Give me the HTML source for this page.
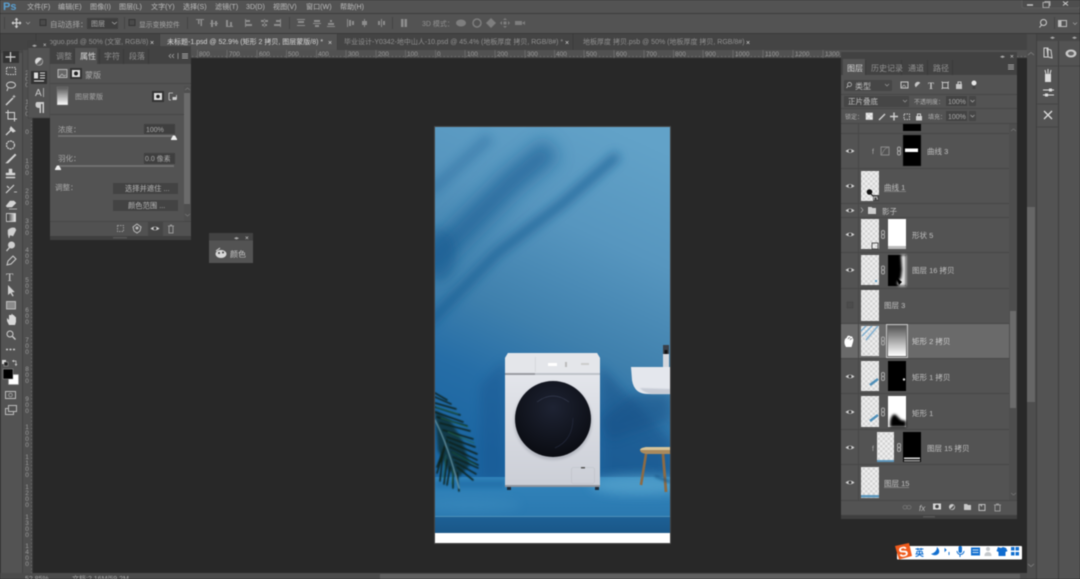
<!DOCTYPE html>
<html><head><meta charset="utf-8"><title>Photoshop</title>
<style>
html,body{margin:0;padding:0;width:1080px;height:579px;overflow:hidden;background:#282828}
svg{display:block;filter:blur(.45px)}
text{font-family:"Liberation Sans","Noto Sans CJK SC",sans-serif;font-size:8px;fill:#b8b8b8}
.mn text{font-size:7.1px;fill:#bdbdbd}
.s{font-size:7px;fill:#a8a8a8}
.r{font-size:6.5px;fill:#9c9c9c}
.d{fill:#909090}
.w{fill:#d8d8d8}
</style></head><body>
<svg width="1080" height="579" viewBox="0 0 1080 579" xmlns="http://www.w3.org/2000/svg">
<defs>
<pattern id="ck" width="5" height="5" patternUnits="userSpaceOnUse"><rect width="5" height="5" fill="#efefef"/><rect width="2.5" height="2.5" fill="#d4d4d4"/><rect x="2.5" y="2.5" width="2.5" height="2.5" fill="#d4d4d4"/></pattern>
<linearGradient id="wall" x1=".75" y1="0" x2=".45" y2="1"><stop offset="0" stop-color="#62a2c8"/><stop offset=".3" stop-color="#5796bf"/><stop offset=".6" stop-color="#3f80ad"/><stop offset=".8" stop-color="#266ea7"/><stop offset="1" stop-color="#1c66a2"/></linearGradient>
<linearGradient id="floor" x1="0" y1="0" x2="0" y2="1"><stop offset="0" stop-color="#3284bb"/><stop offset="1" stop-color="#2b79b0"/></linearGradient>
<linearGradient id="front" x1="0" y1="0" x2="0" y2="1"><stop offset="0" stop-color="#1d6095"/><stop offset="1" stop-color="#1a5788"/></linearGradient>
<linearGradient id="wash" x1="0" y1="0" x2="0" y2="1"><stop offset="0" stop-color="#e8eaef"/><stop offset="1" stop-color="#cbced6"/></linearGradient>
<linearGradient id="gm" x1="0" y1="0" x2="0" y2="1"><stop offset="0" stop-color="#555"/><stop offset="1" stop-color="#fff"/></linearGradient>
<linearGradient id="tg" x1="0" x2="1"><stop offset="0" stop-color="#222"/><stop offset="1" stop-color="#eee"/></linearGradient>
<radialGradient id="door" cx=".5" cy=".35" r=".65"><stop offset="0" stop-color="#1e2333"/><stop offset="1" stop-color="#0a0c12"/></radialGradient>
<filter id="b5" x="-60%" y="-100%" width="220%" height="300%"><feGaussianBlur stdDeviation="5"/></filter>
<filter id="b8" x="-60%" y="-60%" width="220%" height="220%"><feGaussianBlur stdDeviation="9"/></filter>
<filter id="b4" x="-60%" y="-60%" width="220%" height="220%"><feGaussianBlur stdDeviation="5"/></filter>
<filter id="b2" x="-60%" y="-200%" width="220%" height="500%"><feGaussianBlur stdDeviation="2"/></filter>
<filter id="b1" x="-30%" y="-30%" width="160%" height="160%"><feGaussianBlur stdDeviation="1.2"/></filter>
<filter id="b0" x="-30%" y="-30%" width="160%" height="160%"><feGaussianBlur stdDeviation=".5"/></filter>
<clipPath id="img"><rect x="435" y="127" width="235" height="406"/></clipPath>
<g id="eye"><path d="M-4.5 0Q0-3.8 4.5 0Q0 3.8-4.5 0Z" fill="#d0d0d0"/><circle r="1.5" fill="#3c3c3c"/></g>
<g id="lnk" fill="none" stroke="#a8a8a8" stroke-width="1"><rect x="-1.5" y="-4" width="3" height="4" rx="1.5"/><rect x="-1.5" y="0" width="3" height="4" rx="1.5"/></g>
<path id="tri" d="M-3 2L-1 -1.5H1L3 2V3H-3Z" fill="#eee"/>
</defs>

<rect width="1080" height="579" fill="#282828"/>

<!-- top bars -->
<rect width="1080" height="13" fill="#535353"/>
<rect y="13" width="1080" height="1" fill="#3c3c3c"/>
<rect y="14" width="1080" height="19" fill="#535353"/>
<rect y="33" width="1080" height="1" fill="#3a3a3a"/>
<rect y="34" width="1080" height="16" fill="#444"/>
<text x="3" y="10" style="font-size:11px;font-weight:bold;fill:#5a9fd0">Ps</text>
<g class="mn"><text x="27" y="9">文件(F)</text><text x="58" y="9">编辑(E)</text><text x="90" y="9">图像(I)</text><text x="119" y="9">图层(L)</text><text x="151" y="9">文字(Y)</text><text x="183" y="9">选择(S)</text><text x="215" y="9">滤镜(T)</text><text x="246" y="9">3D(D)</text><text x="273" y="9">视图(V)</text><text x="306" y="9">窗口(W)</text><text x="340" y="9">帮助(H)</text></g>
<path d="M1022 0v6q0 2 2 2h54q2 0 2-2V0" fill="#4e4e4e" stroke="#666" stroke-width=".6"/>
<path d="M1027 5h6" stroke="#ccc" stroke-width="1.4"/>
<path d="M1043 2.500h6v5h-6zM1045 2.500v-1h5v4h-1" fill="none" stroke="#bbb" stroke-width=".8"/>
<path d="M1063 1.500l5 4M1068 1.500l-5 4" stroke="#ccc" stroke-width="1"/>

<!-- options bar -->
<g stroke="#444" stroke-width="1"><path d="M4.500 17v12M124.500 17v12M187.500 17v12M289.500 17v12M392.500 17v12M1054.500 17v12"/></g>
<g stroke="#d4d4d4" fill="#d4d4d4"><path d="M16.500 18v10M12 23h9" stroke-width="1.300"/><path d="M14.500 20l2-2 2 2zM14.500 26l2 2 2-2zM13.500 21l-2 2 2 2zM19.500 21l2 2-2 2z" stroke="none"/></g>
<path d="M26 22l2 2 2-2" fill="none" stroke="#999" stroke-width=".8"/>
<rect x="40" y="19.500" width="6" height="6" fill="#4a4a4a" stroke="#333"/>
<text x="50" y="27" class="s" style="font-size:7.500px">自动选择：</text>
<rect x="87" y="18" width="31" height="11" fill="#3f3f3f"/><text x="91" y="26" class="s">图层</text><path d="M112 22l2.500 2 2.500-2" fill="none" stroke="#aaa" stroke-width=".8"/>
<rect x="129" y="19.500" width="6" height="6" fill="#4a4a4a" stroke="#333"/>
<text x="139" y="27" class="s" style="font-size:6.800px">显示变换控件</text>
<g fill="#8d8d8d">
<path d="M196 19h8v1h-2v6h-1.500v-6h-1v4h-1.500v-4h-2z"/><path d="M210 23h8v1h-8zM211 20h2v7h-2zM215 21h2v5h-2z"/><path d="M226 27h7v-1h-7zM226 20h2v6h-2zM230 22h2v4h-2z"/>
<path d="M245 19v8h1v-8zM246 20h4v2h-4zM246 24h6v2h-6z"/><path d="M264 19v8h1v-8zM261 20h7v2h-7zM262 24h5v2h-5z"/><path d="M281 19v8h-1v-8zM276 20h4v2h-4zM274 24h6v2h-6z"/>
<path d="M297 19h8v1h-8zM298 21h6v2h-6zM297 25h8v1h-8z"/><path d="M313 23h8v1h-8zM314 20h6v2h-6zM315 25h4v2h-4z"/><path d="M327 26h8v1h-8zM328 23h6v2h-6zM330 20h2v2h-2z"/>
<path d="M347 19h1v8h-1zM349 20h2v6h-2zM352 21h2v4h-2z"/><path d="M364 19h1v8h-1zM362 21h2v4h-2zM365 21h2v4h-2z"/><path d="M381 19h1v8h-1zM378 21h2v4h-2zM383 21h2v4h-2z"/>
<path d="M401 19h2.500v8h-2.500zM404.500 19h2.500v8h-2.500z"/>
</g>
<text x="422" y="26" class="d" style="font-size:7px">3D 模式：</text>
<g fill="#7e7e7e"><ellipse cx="461" cy="23" rx="5" ry="3.500"/><circle cx="477" cy="23" r="4" fill="none" stroke="#7e7e7e" stroke-width="1.500"/><path d="M491 18l5 5-5 5-5-5z"/><path d="M505 18l2 2h-4zM505 28l2-2h-4zM500 23l2-2v4zM510 23l-2-2v4z"/><rect x="503.500" y="21.500" width="3" height="3"/><rect x="515" y="21" width="7" height="4"/><path d="M522 23l3-2v4z"/></g>
<circle cx="1043.500" cy="22.500" r="3" fill="none" stroke="#ccc" stroke-width="1"/><path d="M1041.500 25l-2 2.500" stroke="#ccc" stroke-width="1"/>
<rect x="1058.500" y="20.500" width="8" height="6" fill="none" stroke="#bbb"/><rect x="1059" y="21" width="2.500" height="5" fill="#bbb"/>
<path d="M1073 22.500l2 2 2-2" fill="none" stroke="#999" stroke-width=".8"/>

<!-- tabs -->
<path d="M36 34v16M160 34v16M337 34v16M573 34v16" stroke="#3a3a3a"/>
<rect x="160" y="34" width="177" height="16" fill="#535353"/>
<text x="49" y="44" class="d" style="font-size:7px">oguo.psd @ 50% (文室, RGB/8)</text>
<text x="150" y="45" class="w" style="font-size:7px">×</text>
<text x="167" y="44" class="w" style="font-size:7px">未标题-1.psd @ 52.9% (矩形 2 拷贝, 图层蒙版/8) *</text>
<text x="328" y="45" class="w" style="font-size:7px">×</text>
<text x="344" y="44" class="d" style="font-size:7px">毕业设计-Y0342-地中山人-10.psd @ 45.4% (地板厚度 拷贝, RGB/8#) *</text>
<text x="565" y="45" class="w" style="font-size:7px">×</text>
<text x="583" y="44" class="d" style="font-size:7px">地板厚度 拷贝.psb @ 50% (地板厚度 拷贝, RGB/8#)</text>
<text x="746" y="45" class="w" style="font-size:7px">×</text>

<!-- rulers -->
<rect x="0" y="50" width="1027" height="8" fill="#515151"/>
<rect x="33" y="57.500" width="994" height=".8" fill="#3c3c3c"/>
<line x1="33" y1="56.500" x2="1027" y2="56.500" stroke="#777" stroke-width="1" stroke-dasharray="1 2.700"/>
<g>
<text class="r" x="199" y="56">800</text><text class="r" x="229" y="56">700</text><text class="r" x="259" y="56">600</text><text class="r" x="288" y="56">500</text><text class="r" x="318" y="56">400</text><text class="r" x="348" y="56">300</text><text class="r" x="378" y="56">200</text><text class="r" x="407" y="56">100</text><text class="r" x="437" y="56">0</text><text class="r" x="467" y="56">100</text><text class="r" x="497" y="56">200</text><text class="r" x="527" y="56">300</text><text class="r" x="556" y="56">400</text><text class="r" x="586" y="56">500</text><text class="r" x="616" y="56">600</text><text class="r" x="646" y="56">700</text><text class="r" x="675" y="56">800</text><text class="r" x="705" y="56">900</text><text class="r" x="735" y="56">1000</text><text class="r" x="765" y="56">1100</text><text class="r" x="795" y="56">1200</text><text class="r" x="825" y="56">1300</text>
</g>
<path d="M197.500 50v8M227 50v8M257 50v8M286.500 50v8M316.500 50v8M346 50v8M376 50v8M405.500 50v8M435.500 50v8M465 50v8M495 50v8M525 50v8M554.500 50v8M584 50v8M614 50v8M644 50v8M673.500 50v8M703 50v8M733 50v8M763 50v8M793 50v8M823 50v8" stroke="#727272" stroke-width=".7"/>

<rect x="0" y="50" width="33" height="529" fill="#4f4f4f"/>
<rect x="0" y="50" width="1" height="529" fill="#3c3c3c"/>
<rect x="1" y="50" width="21" height="523" fill="#535353"/>
<rect x="22" y="50" width="1" height="529" fill="#424242"/>
<rect x="32" y="58" width="1" height="521" fill="#3a3a3a"/>
<line x1="31.500" y1="58" x2="31.500" y2="573" stroke="#777" stroke-dasharray="1 2.700"/>
<g id="vr" style="text-anchor:middle">
<text class="r" x="27" y="75">2</text><text class="r" x="27" y="81">0</text><text class="r" x="27" y="87">0</text>
<text class="r" x="27" y="104">1</text><text class="r" x="27" y="110">0</text><text class="r" x="27" y="116">0</text>
<text class="r" x="27" y="134">0</text>
<text class="r" x="27" y="163">1</text><text class="r" x="27" y="169">0</text><text class="r" x="27" y="175">0</text>
<text class="r" x="27" y="193">2</text><text class="r" x="27" y="199">0</text><text class="r" x="27" y="205">0</text>
<text class="r" x="27" y="223">3</text><text class="r" x="27" y="229">0</text><text class="r" x="27" y="235">0</text>
<text class="r" x="27" y="252">4</text><text class="r" x="27" y="258">0</text><text class="r" x="27" y="264">0</text>
<text class="r" x="27" y="282">5</text><text class="r" x="27" y="288">0</text><text class="r" x="27" y="294">0</text>
<text class="r" x="27" y="312">6</text><text class="r" x="27" y="318">0</text><text class="r" x="27" y="324">0</text>
<text class="r" x="27" y="342">7</text><text class="r" x="27" y="348">0</text><text class="r" x="27" y="354">0</text>
<text class="r" x="27" y="371">8</text><text class="r" x="27" y="377">0</text><text class="r" x="27" y="383">0</text>
<text class="r" x="27" y="401">9</text><text class="r" x="27" y="407">0</text><text class="r" x="27" y="413">0</text>
<text class="r" x="27" y="429">1</text><text class="r" x="27" y="435">0</text><text class="r" x="27" y="441">0</text><text class="r" x="27" y="447">0</text>
<text class="r" x="27" y="459">1</text><text class="r" x="27" y="465">1</text><text class="r" x="27" y="471">0</text><text class="r" x="27" y="477">0</text>
<text class="r" x="27" y="489">1</text><text class="r" x="27" y="495">2</text><text class="r" x="27" y="501">0</text><text class="r" x="27" y="507">0</text>
<text class="r" x="27" y="519">1</text><text class="r" x="27" y="525">3</text><text class="r" x="27" y="531">0</text><text class="r" x="27" y="537">0</text>
<text class="r" x="27" y="548">1</text><text class="r" x="27" y="554">4</text><text class="r" x="27" y="560">0</text><text class="r" x="27" y="566">0</text>
</g>

<!-- tools -->
<rect x="1" y="50" width="21" height="3" fill="#484848"/>
<rect x="3" y="51" width="16" height="12" fill="#333"/>
<g fill="#d4d4d4" stroke="#d4d4d4" stroke-width="1">
<path d="M10.500 52v10M5.500 57h10" stroke-width="1.200"/>
<rect x="6.500" y="67.500" width="9" height="7" fill="none" stroke-dasharray="1.500 1"/>
<ellipse cx="11" cy="85" rx="4.500" ry="3" fill="none"/><path d="M8 88l-1 3" fill="none"/>
<path d="M6 105l7-7" stroke-width="1.500"/><path d="M14 95v3M12.500 96.500h3" stroke-width=".7"/>
<path d="M8 110v9h9M5.500 112.500h9v9" fill="none"/>
<path d="M6 135l6-6" stroke-width="1.300"/><path d="M11 127l4 4-2 1-3-3z"/>
<ellipse cx="10.500" cy="145" rx="4" ry="4" fill="none" stroke-dasharray="2 .6" stroke-width="1.200"/>
<path d="M6 163l3-3 6-6 1 1-6 6-2 2z" stroke-width=".6"/>
<path d="M9 169h3v4h3v2H6v-2h3zM6 177h9v1H6z" stroke-width=".5"/>
<path d="M6 193l8-8M7 186l2 2" stroke-width="1.200"/><path d="M14 192h3" stroke-width=".8"/>
<path d="M6 206l4-5h4l2 2-4 4H7z" stroke-width=".5"/><path d="M9 209h8" stroke-width=".7"/>
</g>
<rect x="6.500" y="213.500" width="9" height="8" fill="url(#tg)" stroke="#ddd" stroke-width=".8"/>
<g fill="#cfcfcf" stroke="#cfcfcf" stroke-width="1">
<path d="M8 230q3-3 7-2l1 2-3 6-3-1-1 3-1-4z" stroke-width=".4"/>
<circle cx="11.500" cy="245" r="3" /><path d="M9.500 247.500l-3 3.500" stroke-width="1.300"/>
<path d="M7 265l1-4 5-5 3 3-5 5z" fill="none"/>
</g>
<text x="6" y="281" style="font-size:12px;font-family:'Liberation Serif',serif;fill:#cfcfcf">T</text>
<path d="M8 285v10l2.500-2 2 3.500 1.200-.8-2-3.300 3-.4z" fill="#cfcfcf"/>
<rect x="6.500" y="301.500" width="9" height="7.500" fill="#8a8a8a" stroke="#cfcfcf" stroke-width=".8"/>
<path d="M7 318v3l2 4h6l1-3v-5h-1v-1h-1v-1h-1.500v-1h-1v1H9v5z" fill="#d8d8d8"/>
<circle cx="10" cy="334" r="3" fill="none" stroke="#cfcfcf" stroke-width="1"/><path d="M12.500 336.500l3 3" stroke="#cfcfcf" stroke-width="1.300"/>
<path d="M6 349.500h2M9.500 349.500h2M13 349.500h2" stroke="#cfcfcf" stroke-width="1.500"/>
<rect x="2" y="360" width="4" height="4" fill="#ddd"/><rect x="4" y="362" width="4" height="4" fill="#222" stroke="#ccc" stroke-width=".4"/>
<path d="M13 361h3v4M14 360l-1.500 1 1.500 1M15 364l1 1.500 1-1.500" fill="none" stroke="#ccc" stroke-width=".7"/>
<rect x="8.500" y="374.500" width="10" height="10" fill="#fff" stroke="#999" stroke-width=".5"/>
<rect x="3" y="369" width="10" height="10" fill="#000" stroke="#aaa" stroke-width=".5"/>
<rect x="5.500" y="391.500" width="10" height="7" fill="none" stroke="#bbb"/><circle cx="10.500" cy="395" r="1.800" fill="none" stroke="#999"/>
<rect x="5.500" y="408.500" width="8" height="6" fill="#535353" stroke="#bbb"/><rect x="8.500" y="405.500" width="8" height="6" fill="#535353" stroke="#bbb"/>

<!-- canvas scroll + dock -->
<rect x="1027" y="34" width="53" height="545" fill="#4c4c4c"/>
<rect x="1027" y="50" width="8" height="529" fill="#4e4e4e"/>
<rect x="1027" y="207" width="8" height="195" fill="#666"/>
<path d="M1028 564l3 2.500 3-2.500M1028 55l3-2.500 3 2.500" fill="none" stroke="#777" stroke-width=".9"/>
<rect x="1036" y="34" width="1" height="545" fill="#3f3f3f"/>
<rect x="1037" y="34" width="21" height="545" fill="#535353"/>
<rect x="1058" y="34" width="1" height="545" fill="#3f3f3f"/>
<rect x="1059" y="34" width="21" height="545" fill="#535353"/>
<rect x="1037" y="34" width="43" height="7" fill="#474747"/>
<path d="M1037 66h21M1037 104h21M1037 127h21M1059 66h21" stroke="#454545"/>
<text x="1050" y="39" class="s" style="font-size:5px">◂▸</text><text x="1072" y="39" class="s" style="font-size:5px">◂▸</text>
<path d="M1044 48h4v9h-4zM1047 49l4 1 1 8-4-1z" fill="none" stroke="#d0d0d0" stroke-width="1"/>
<ellipse cx="1071" cy="53.500" rx="5.500" ry="4" fill="#c8c8c8"/><ellipse cx="1071" cy="53.500" rx="3" ry="2" fill="#666"/>
<path d="M1045 74h6v8h-6z" fill="#ddd"/><path d="M1046 74l-1-4M1048 74v-5M1050 74l1-4" stroke="#ddd" stroke-width="1"/>
<path d="M1043 90h11M1043 95h11" stroke="#ddd" stroke-width="1"/><rect x="1049" y="88.500" width="3" height="3" fill="#ddd"/><rect x="1045" y="93.500" width="3" height="3" fill="#ddd"/>
<path d="M1044 111l8 8M1052 111l-8 8" stroke="#ddd" stroke-width="1.300"/>

<!-- status bar -->
<rect x="33" y="573" width="994" height="6" fill="#4b4b4b"/>
<rect x="0" y="573" width="33" height="6" fill="#4b4b4b"/>
<rect x="380" y="574" width="640" height="5" fill="#606060"/>
<text x="25" y="581" class="s">52.85%</text><text x="72" y="581" class="s">文档:2.16M/59.2M</text>

<!-- IMAGE -->
<rect x="434.500" y="126.500" width="236" height="417" fill="none" stroke="#444"/>
<rect x="435" y="127" width="235" height="416" fill="#fff"/>
<g clip-path="url(#img)">
<rect x="435" y="127" width="235" height="352" fill="url(#wall)"/>
<g fill="none" stroke="#175a90">
<path d="M428 324L497 253L563 203L618 155" stroke-width="9" opacity=".72" filter="url(#b4)"/>
<path d="M425 268L513 180L552 148" stroke-width="24" opacity=".68" filter="url(#b8)"/>
<path d="M430 192L490 137" stroke-width="12" opacity=".32" filter="url(#b4)"/>
</g>
<ellipse cx="440" cy="255" rx="16" ry="26" fill="#175a90" opacity=".45" filter="url(#b4)"/>
<!-- shadows -->
<path d="M600 365L670 440V480H600Z" fill="#124f85" opacity=".5" filter="url(#b5)"/>
<path d="M632 395L600 420L610 440L670 420V395Z" fill="#124f85" opacity=".5" filter="url(#b5)"/>
<path d="M505 360L480 385V480H505Z" fill="#125089" opacity=".35" filter="url(#b5)"/>
<!-- floor -->
<rect x="435" y="477" width="235" height="40" fill="url(#floor)"/>
<ellipse cx="640" cy="485" rx="50" ry="10" fill="#59a6cf" opacity=".7" filter="url(#b5)"/>
<ellipse cx="470" cy="505" rx="50" ry="8" fill="#3f8fc0" opacity=".4" filter="url(#b5)"/>
<path d="M435 480h70v8h-70z" fill="#15609b" opacity=".45" filter="url(#b2)"/>
<rect x="435" y="516" width="235" height="1" fill="#4c90ba"/>
<rect x="435" y="517" width="235" height="16" fill="url(#front)"/>
<!-- washer -->
<rect x="507" y="487" width="4" height="3" fill="#1c2c3c"/><rect x="595" y="487" width="4" height="3" fill="#1c2c3c"/>
<path d="M505 358l3-5h89l3 5v127q0 2-2 2h-91q-2 0-2-2z" fill="url(#wash)"/>
<path d="M505 358l3-5h89l3 5v14h-95z" fill="#e4e6ea"/>
<rect x="505" y="373" width="95" height="2" fill="#bfc2c8"/>
<rect x="505" y="373" width="30" height="2" fill="#9a9ca2"/>
<path d="M535 357h.8v15h-.8z" fill="#d2d4d8"/>
<rect x="548" y="363" width="9" height="3" fill="#fff"/>
<rect x="565" y="362" width="2" height="5" fill="#bbb"/>
<rect x="581" y="363" width="8" height="2" fill="#ccc"/>
<rect x="571.500" y="467.500" width="23" height="16" rx="2" fill="none" stroke="#bcbfc5" stroke-width=".6"/>
<rect x="581" y="467" width="4" height="1.500" fill="#555"/>
<rect x="505" y="485" width="95" height="2" fill="#8f939c"/>
<circle cx="553" cy="421" r="39" fill="#9a9ea8" opacity=".55" filter="url(#b1)"/>
<circle cx="553" cy="419" r="38" fill="url(#door)"/>
<path d="M537 402q16-12 32 0" fill="none" stroke="#343a4e" stroke-width=".7"/>
<path d="M555 448q18-8 18-30" fill="none" stroke="#22283a" stroke-width=".8"/>
<!-- sink -->
<path d="M631 367h39v27h-22q-14 0-16-14z" fill="#e4e7ed"/>
<path d="M640 388q4 5 12 6h18v-5z" fill="#c7ccd6" filter="url(#b0)"/>
<rect x="663" y="350" width="6" height="17" fill="#d4d7dd"/>
<rect x="663" y="345" width="6" height="9" fill="#3a3f48"/>
<rect x="664.500" y="350" width="3" height="4" fill="#111"/>
<!-- stool -->
<path d="M646 454l-5 31" stroke="#8c6b45" stroke-width="2.600"/>
<path d="M663 454l3 38" stroke="#8c6b45" stroke-width="2.800"/>
<path d="M640 450q0-2 6-3h24v7h-24q-6-1-6-4z" fill="#a98a5e"/>
<path d="M640 450q0-2 6-3h24v3h-30z" fill="#d6c49a"/>
<path d="M655 476l15 6" stroke="#144f80" stroke-width="3" opacity=".6" filter="url(#b1)"/>
<!-- plant -->
<path d="M435 410L450 420L462 440L470 465L458 478L448 470L438 450Z" fill="#0b2622" opacity=".7" filter="url(#b1)"/>
<g fill="none" stroke-linecap="round" filter="url(#b0)">
<g stroke="#0a211d" stroke-width="1.500">
<path d="M435 393L447 400M435 397L451 404M435 403L456 409M435 407L460 415M435 412L463 422M437 417L467 426M440 423L470 431M443 430L473 439M447 437L475 447M449 442L477 454M450 447L477 460M452 452L478 465M453 457L478 468M455 462L476 474M457 467L473 480"/>
<path d="M447 440L437 467M445 447L437 473M443 453L440 481M447 460L444 484M450 467L447 485M453 470L453 488M457 473L459 491"/>
</g>
<g stroke="#23634c" stroke-width=".7">
<path d="M436 407L458 414M441 418L468 427M448 432L474 443M452 452L476 465"/>
<path d="M446 455L443 478M453 470L452 484"/>
</g>
<path d="M435 420Q448 445 459 488" stroke="#6a9bab" stroke-width="1.200"/>
</g>
</g>

<!-- small collapsed panel -->
<rect x="28" y="41" width="22" height="77" fill="#535353" stroke="#3c3c3c" stroke-width=".5"/>
<rect x="28" y="41" width="22" height="7" fill="#424242"/>
<text x="32" y="47" class="s" style="font-size:5px">◂▸</text><text x="43" y="47" class="w" style="font-size:6px">×</text>
<circle cx="39" cy="61.500" r="4" fill="#d8d8d8"/><path d="M36.200 64.300l5.600-5.600a4 4 0 0 1-5.600 5.600z" fill="#666"/>
<rect x="31" y="71" width="16" height="13" fill="#333"/>
<rect x="34" y="72.500" width="4" height="6" fill="#ddd"/><path d="M40 73h5M40 75.500h5M40 78h5M34 81h10" stroke="#ddd" stroke-width="1"/>
<text x="35" y="96" style="font-size:10px;fill:#ccc">A</text><path d="M43.500 88v9" stroke="#ccc" stroke-width=".7"/>
<path d="M37 102h7v11h-1.500v-9H41v9h-1.500v-5q-4 0-4-3t1.500-3z" fill="#ccc"/>

<!-- properties panel -->
<rect x="50" y="46" width="141" height="193" fill="#535353"/>
<rect x="50" y="46" width="141" height="18" fill="#424242"/>
<rect x="75" y="48" width="22" height="16" fill="#535353"/>
<path d="M99.500 49v15M123.500 49v15M148.500 49v15M74.500 49v15" stroke="#3a3a3a"/>
<text x="56" y="59" class="d">调整</text><text x="80" y="59" class="w">属性</text><text x="104" y="59" class="d">字符</text><text x="129" y="59" class="d">段落</text>
<path d="M171 54l-2 2 2 2M174 54l-2 2 2 2" fill="none" stroke="#aaa" stroke-width=".7"/><path d="M178 53v6" stroke="#888"/><path d="M182 54h6M182 56h6M182 58h6" stroke="#aaa"/>
<rect x="58" y="69.500" width="9" height="8" fill="#666" stroke="#ccc" stroke-width=".8"/><path d="M59 77l3-3 2 2 2-1" stroke="#ccc" fill="none" stroke-width=".6"/>
<rect x="70" y="68" width="12" height="11" fill="#333"/><rect x="72" y="70" width="8" height="7" fill="#ddd"/><circle cx="76" cy="73.500" r="2" fill="#222"/>
<text x="85" y="78" style="fill:#aaa">蒙版</text>
<path d="M50 83.500h141" stroke="#474747"/>
<rect x="57" y="87" width="11" height="18" fill="url(#gm)" stroke="#777" stroke-width=".5"/>
<text x="75" y="99" style="fill:#a5a5a5;font-size:7px">图层蒙版</text>
<rect x="152" y="91" width="12" height="11" fill="#333"/><rect x="154" y="93" width="8" height="7" fill="#ddd"/><circle cx="158" cy="96.500" r="1.800" fill="#222"/>
<path d="M169 93h4M169 93v7M171 100h-2M173 99h3.500v-4" fill="none" stroke="#ccc" stroke-width=".8"/><rect x="172.500" y="97" width="4" height="3" fill="#ccc"/>
<path d="M50 114.500h134" stroke="#474747"/>
<text x="58" y="132" class="s" style="font-size:7.500px">浓度：</text>
<rect x="144" y="124" width="31" height="10" fill="#3f3f3f"/><text x="146" y="132" class="s">100%</text>
<rect x="58" y="135" width="116" height="2" fill="#6f6f6f"/><use href="#tri" x="174" y="137"/>
<text x="58" y="161" class="s" style="font-size:7.500px">羽化：</text>
<rect x="144" y="153" width="31" height="11" fill="#3f3f3f"/><text x="145" y="161" class="s">0.0 像素</text>
<rect x="58" y="165" width="116" height="2" fill="#6f6f6f"/><use href="#tri" x="58" y="167"/>
<text x="55" y="190" class="s" style="font-size:7.500px">调整：</text>
<rect x="113" y="183" width="65" height="11" fill="#434343"/><text x="125" y="191" class="s" style="font-size:7.300px;fill:#b5b5b5">选择并遮住 ...</text>
<rect x="113" y="200" width="65" height="11" fill="#434343"/><text x="128" y="208" class="s" style="font-size:7.300px;fill:#b5b5b5">颜色范围 ...</text>
<rect x="184" y="86" width="7" height="135" fill="#4f4f4f"/><rect x="184" y="93" width="6" height="111" fill="#6b6b6b"/>
<path d="M185 90l2.500-2 2.500 2M185 214l2.500 2 2.500-2" fill="none" stroke="#777" stroke-width=".7"/>
<rect x="50" y="221" width="141" height="15" fill="#515151"/>
<path d="M50 221.500h141" stroke="#474747"/>
<rect x="148" y="222" width="15" height="14" fill="#454545"/>
<rect x="117.500" y="225.500" width="6" height="6" fill="none" stroke="#999" stroke-dasharray="1.500 1"/>
<path d="M137 224l4 3-1 4-3 2-3-2-1-4z" fill="none" stroke="#bbb" stroke-width="1"/><circle cx="137" cy="228" r="1.500" fill="#bbb"/>
<use href="#eye" x="155" y="228.500"/>
<path d="M168 226h6M169 226v7h4v-7M170 225h2" fill="none" stroke="#999"/>
<rect x="50" y="236" width="141" height="4" fill="#3f3f3f"/>
<rect x="113" y="237" width="14" height="1.500" fill="#555"/>

<!-- color panel -->
<rect x="209" y="233" width="44" height="30" fill="#535353"/>
<rect x="209" y="233" width="44" height="7.500" fill="#424242"/>
<text x="234" y="239.500" class="s" style="font-size:5px">◂▸</text><text x="245" y="240" class="w" style="font-size:6.500px">×</text>
<ellipse cx="221" cy="254" rx="5.500" ry="4" fill="#d8d8d8"/><circle cx="219" cy="253" r="1" fill="#444"/><circle cx="223" cy="252.500" r="1" fill="#444"/><path d="M216 251l4-3" stroke="#d8d8d8"/>
<text x="230" y="257" style="fill:#c4c4c4">颜色</text>

<!-- layers panel -->
<rect x="841" y="52" width="176" height="467" fill="#535353"/>
<rect x="841" y="52" width="176" height="23" fill="#424242"/>
<rect x="843" y="59" width="22" height="16" fill="#535353"/>
<path d="M865.500 60v15M901.500 60v15M927.500 60v15M952.500 60v15" stroke="#3a3a3a"/>
<text x="847" y="71" class="w">图层</text><text x="871" y="71" class="d">历史记录</text><text x="908" y="71" class="d">通道</text><text x="933" y="71" class="d">路径</text>
<text x="1000" y="58" class="s" style="font-size:5px">◂▸</text><text x="1010" y="58.500" class="w" style="font-size:6.500px">×</text>
<path d="M1008 65h6M1008 67h6M1008 69h6" stroke="#aaa"/>
<rect x="844" y="80" width="48" height="11" rx="1" fill="#464646"/>
<circle cx="849.500" cy="84.500" r="2" fill="none" stroke="#ccc" stroke-width=".7"/><path d="M848 86l-1.500 2" stroke="#ccc" stroke-width=".7"/>
<text x="855" y="89" style="fill:#c0c0c0">类型</text><path d="M885 84l2 2 2-2" fill="none" stroke="#999" stroke-width=".7"/>
<rect x="901" y="82" width="7" height="6" fill="none" stroke="#c6c6c6"/><path d="M902 87l2-2 2 2" stroke="#c6c6c6" fill="none" stroke-width=".6"/>
<circle cx="918" cy="85" r="3.200" fill="#c6c6c6"/><path d="M915.500 87.500l5-5a3.500 3.500 0 0 1-5 5z" fill="#555"/>
<text x="928" y="89" style="font-size:9px;font-family:'Liberation Serif',serif;font-weight:bold;fill:#c6c6c6">T</text>
<rect x="942.500" y="82.500" width="5.500" height="5.500" fill="none" stroke="#c6c6c6"/><path d="M941.500 81.500h1v1h-1zM948 81.500h1v1h-1zM941.500 88h1v1h-1zM948 88h1v1h-1z" fill="#c6c6c6"/>
<rect x="956" y="84" width="6" height="5" fill="#c6c6c6"/><path d="M958 84v-2h3v2" fill="none" stroke="#c6c6c6"/>
<circle cx="974" cy="83" r="2.500" fill="#e6e6e6"/><rect x="972.500" y="86" width="3" height="3" fill="#444"/>
<path d="M841 94.500h176M841 108.500h176M841 123.500h176" stroke="#474747"/>
<rect x="844" y="96" width="65" height="11" fill="#464646"/><text x="848" y="104" style="fill:#c0c0c0;font-size:7.500px">正片叠底</text><path d="M903 100l2 2 2-2" fill="none" stroke="#999" stroke-width=".7"/>
<text x="914" y="104" class="s" style="font-size:6px;fill:#b0b0b0">不透明度：</text>
<rect x="946" y="96" width="21" height="10" fill="#434343"/><text x="948" y="104" class="s">100%</text>
<rect x="969" y="96" width="7" height="10" fill="#464646"/><path d="M970.500 100l2 2 2-2" fill="none" stroke="#aaa" stroke-width=".7"/>
<text x="845" y="119" class="s" style="font-size:6px;fill:#b0b0b0">锁定：</text>
<rect x="866" y="113" width="6.500" height="6.500" fill="url(#ck)" stroke="#ddd" stroke-width=".6"/>
<path d="M879 120l6-6" stroke="#d0d0d0" stroke-width="1.400"/>
<path d="M894 112.500v8M890 116.500h8" stroke="#d0d0d0" stroke-width="1.400"/>
<rect x="904" y="114" width="5.500" height="5.500" fill="none" stroke="#c6c6c6" stroke-dasharray="1.500 1"/>
<rect x="916" y="116" width="6" height="4.500" fill="#d0d0d0"/><path d="M917.500 116v-2h3v2" fill="none" stroke="#d0d0d0"/>
<text x="928" y="119" class="s" style="font-size:6px;fill:#b0b0b0">填充：</text>
<rect x="946" y="111" width="21" height="10" fill="#434343"/><text x="948" y="119" class="s">100%</text>
<rect x="969" y="111" width="7" height="10" fill="#464646"/><path d="M970.500 115l2 2 2-2" fill="none" stroke="#aaa" stroke-width=".7"/>

<!-- rows -->
<rect x="841" y="323" width="168" height="35" fill="#6a6a6a"/>
<path d="M841 133.500h168M841 168.500h168M841 203.500h168M841 217.500h168M841 252.500h168M841 288.500h168M841 323.500h168M841 358.500h168M841 393.500h168M841 429.500h168M841 464.500h168M841 500.500h176" stroke="#474747"/>
<path d="M858.500 124v376" stroke="#474747"/>
<rect x="1009" y="124" width="8" height="376" fill="#4e4e4e"/>
<rect x="1010" y="311" width="6" height="97" fill="#6b6b6b"/>
<path d="M1011 131l2.500-2 2.500 2M1011 493l2.500 2 2.500-2" fill="none" stroke="#777" stroke-width=".7"/>

<rect x="903" y="124" width="18" height="7" fill="#000"/>

<use href="#eye" x="850" y="151"/>
<text x="872" y="154" class="s">f</text><rect x="881" y="147" width="8" height="8" fill="none" stroke="#999" stroke-width=".8"/><path d="M882 154q3-7 6-6" stroke="#999" fill="none" stroke-width=".6"/>
<use href="#lnk" x="899" y="151"/>
<rect x="903" y="135" width="18" height="31" fill="#000" stroke="#333" stroke-width=".4"/><rect x="905" y="148.500" width="13" height="3.500" fill="#fff"/>
<text x="927" y="154" class="s" style="font-size:7.500px;fill:#c0c0c0">曲线 3</text>

<use href="#eye" x="850" y="186"/>
<rect x="861" y="171" width="18" height="30" fill="url(#ck)"/><circle cx="869.500" cy="192" r="2.800" fill="#111"/>
<path d="M871 194l3 3" stroke="#111"/><rect x="873" y="195" width="6" height="6" fill="#444"/><path d="M874 200v-3h3v2h1" fill="none" stroke="#ddd" stroke-width=".7"/>
<text x="884" y="190" class="s" style="font-size:7.500px;fill:#c0c0c0">曲线 1</text><path d="M884 191.500h22" stroke="#aaa" stroke-width=".6"/>

<use href="#eye" x="850" y="210.500"/>
<path d="M861 207.500l2 2.500-2 2.500" fill="none" stroke="#aaa" stroke-width=".7"/>
<path d="M868 207h3.500l1 1h3.500v6h-8z" fill="#cfcfcf"/>
<text x="882" y="214" class="s" style="font-size:7.500px;fill:#c0c0c0">影子</text>

<use href="#eye" x="850" y="234.500"/>
<rect x="861" y="219" width="18" height="30" fill="url(#ck)"/><rect x="872" y="243" width="6" height="6" fill="none" stroke="#333" stroke-width=".8"/>
<use href="#lnk" x="883" y="234.500"/>
<rect x="888" y="219" width="18" height="30" fill="#fff"/><path d="M888 246h18v3h-18z" fill="#bbb"/>
<text x="912" y="238" class="s" style="font-size:7.500px;fill:#c0c0c0">形状 5</text>

<use href="#eye" x="850" y="270"/>
<rect x="861" y="255" width="18" height="30" fill="url(#ck)"/><rect x="875" y="280" width="2" height="2" fill="#5fa0c8"/>
<use href="#lnk" x="883" y="270"/>
<rect x="888" y="255" width="18" height="31" fill="#000"/>
<path d="M901 255h5v31h-7l-2-3 4-5 1-8z" fill="#fff" opacity=".9" filter="url(#b1)"/><path d="M896 277l6 5-3 3z" fill="#000"/>
<text x="912" y="273" class="s" style="font-size:7.500px;fill:#c0c0c0">图层 16 拷贝</text>

<rect x="847" y="302" width="6" height="6" fill="#4c4c4c" stroke="#444" stroke-width=".6"/>
<rect x="861" y="290" width="18" height="31" fill="url(#ck)"/>
<text x="884" y="308" class="s" style="font-size:7.500px;fill:#c0c0c0">图层 3</text>

<rect x="861" y="326" width="18" height="30" fill="url(#ck)"/><path d="M862 336l10-10M861 331l5-5M866 340l12-14" stroke="#6ea6cc" stroke-width="1.500" fill="none" opacity=".85"/>
<use href="#lnk" x="883" y="341"/>
<rect x="888" y="326" width="18" height="30" fill="url(#gm)"/>
<rect x="886.500" y="324.500" width="21" height="33" fill="none" stroke="#ddd" stroke-width=".8"/>
<text x="912" y="344" class="s" style="font-size:7.500px;fill:#d0d0d0">矩形 2 拷贝</text>
<path d="M846 347q-2-3-1.500-6t2-3l1-2q2-1 3 .5 2-.5 2 1.500 1.500 1 .5 4l-1.500 5z" fill="#fff"/>
<path d="M848 339q1-2 2-1M850 340q1-2 2-1" stroke="#444" fill="none" stroke-width=".6"/>

<use href="#eye" x="850" y="376.500"/>
<rect x="861" y="361" width="18" height="30" fill="url(#ck)"/><path d="M870 385l8-6" stroke="#4f8fb8" stroke-width="2.500"/>
<use href="#lnk" x="883" y="376.500"/>
<rect x="888" y="361" width="18" height="30" fill="#000"/><circle cx="904" cy="379.500" r="1.200" fill="#ddd"/>
<text x="912" y="380" class="s" style="font-size:7.500px;fill:#c0c0c0">矩形 1 拷贝</text>

<use href="#eye" x="850" y="412"/>
<rect x="861" y="396" width="18" height="31" fill="url(#ck)"/><path d="M870 421l8-6" stroke="#4f8fb8" stroke-width="2.500"/>
<use href="#lnk" x="883" y="412"/>
<rect x="888" y="396" width="18" height="31" fill="#fff"/>
<path d="M890 427q0-7 1-9 2-5 5-3 3 3 5 5l5 1v6z" fill="#000" filter="url(#b1)"/>
<text x="912" y="416" class="s" style="font-size:7.500px;fill:#c0c0c0">矩形 1</text>

<use href="#eye" x="850" y="447.500"/>
<text x="872" y="451" class="s">f</text>
<rect x="877" y="432" width="17" height="30" fill="url(#ck)"/><rect x="877" y="460" width="17" height="2" fill="#5d97bc"/>
<use href="#lnk" x="899" y="447.500"/>
<rect x="903" y="432" width="18" height="30" fill="#000"/><rect x="904" y="457.500" width="16" height="1.500" fill="#ddd"/><rect x="904" y="460" width="16" height="1.500" fill="#999"/>
<text x="927" y="451" class="s" style="font-size:7.500px;fill:#c0c0c0">图层 15 拷贝</text>

<use href="#eye" x="850" y="482.500"/>
<rect x="861" y="467" width="18" height="31" fill="url(#ck)"/><rect x="861" y="495" width="18" height="2.500" fill="#5d97bc"/>
<text x="884" y="486" class="s" style="font-size:7.500px;fill:#c0c0c0">图层 15</text><path d="M884 487.500h25" stroke="#aaa" stroke-width=".6"/>

<!-- layers footer -->
<rect x="903" y="505.500" width="4" height="3.500" rx="1.700" fill="none" stroke="#777" stroke-width=".8"/><rect x="907" y="505.500" width="4" height="3.500" rx="1.700" fill="none" stroke="#777" stroke-width=".8"/>
<text x="919" y="511" style="font-size:8px;font-style:italic;fill:#bbb">fx</text>
<rect x="933" y="503.500" width="8" height="6" fill="#d8d8d8"/><circle cx="937" cy="506.500" r="1.800" fill="#444"/>
<circle cx="952" cy="507" r="3" fill="#c8c8c8"/><path d="M950 509l4-4a3 3 0 0 1-4 4z" fill="#555"/>
<path d="M964 504h3l1 1h3v5h-7z" fill="#c8c8c8"/>
<rect x="979" y="504.500" width="6" height="6" fill="none" stroke="#bbb"/><path d="M979 504h3v3z" fill="#bbb"/>
<path d="M994 505h7M995 505v6h5v-6M996 504h3" fill="none" stroke="#999"/>
<rect x="841" y="515" width="176" height="4" fill="#3f3f3f"/>
<rect x="923" y="516" width="12" height="1.500" fill="#555"/>

<!-- sogou bar -->
<rect x="897" y="546" width="125" height="13.500" rx="1" fill="#fff"/>
<path d="M895 546l14-3 3 13-13 3.500z" fill="#ef5a1c"/>
<text x="898.500" y="556.500" transform="rotate(-12 903 551)" style="font-size:14px;font-weight:bold;fill:#fff">S</text>
<text x="915" y="556" style="font-size:9px;font-weight:bold;fill:#1370d0">英</text>
<path d="M937 547q0 5-6 7 5 3 8-1 1-3-2-6z" fill="#1370d0"/>
<path d="M945 549l1 1-1 1zM949 552v3" stroke="#1370d0" fill="none"/>
<rect x="958.500" y="546" width="3.500" height="7" rx="1.700" fill="#1370d0"/><path d="M957 551a3.500 3.500 0 0 0 7 0M960 555v2" fill="none" stroke="#1370d0"/>
<rect x="971" y="547.500" width="9" height="8" fill="#1370d0"/><path d="M972.500 550h6M972.500 552.500h6" stroke="#fff" stroke-width=".7"/>
<circle cx="988" cy="549" r="2" fill="#c4c8cc"/><path d="M984.500 556q0-4 3.500-4t3.500 4z" fill="#c4c8cc"/>
<path d="M998 547l3 1 2-1 3 1 1.500 3-2 1v4h-7v-4l-2-1z" fill="#0f6cd0"/>
<rect x="1011" y="547" width="3.500" height="3.500" fill="#1370d0"/><rect x="1015.500" y="547" width="3.500" height="3.500" fill="#1370d0"/><rect x="1011" y="552" width="3.500" height="3.500" fill="#1370d0"/><rect x="1015.500" y="552" width="3.500" height="3.500" fill="#1370d0"/>
</svg>
</body></html>
